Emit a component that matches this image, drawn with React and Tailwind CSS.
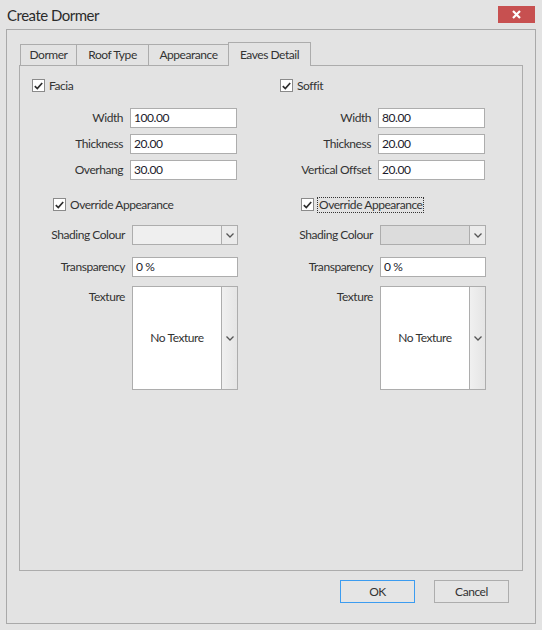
import React from "react";

// Create Dormer dialog — Eaves Detail tab

const Chevron = () => (
  <svg width="8" height="5" viewBox="0 0 8 5">
    <path d="M0.5 0.5 L4 4 L7.5 0.5" stroke="#555" strokeWidth="1.3" fill="none" />
  </svg>
);

const CheckBox = ({ label, focus }) => (
  <div className="flex items-center h-[13px]">
    <span className="w-[13px] h-[13px] border border-[#8a8a8a] bg-white flex items-center justify-center shrink-0">
      <svg width="9" height="8" viewBox="0 0 9 8">
        <path d="M0.8 4.2 L3.3 6.6 L8.2 1" stroke="#2e2e2e" strokeWidth="1.7" fill="none" />
      </svg>
    </span>
    {focus ? (
      <span className="ml-[3px] px-px h-[16px] flex items-center border border-dotted border-[#333] whitespace-nowrap">
        {label}
      </span>
    ) : (
      <span className="ml-[4px] whitespace-nowrap">{label}</span>
    )}
  </div>
);

const Field = ({ label, value }) => (
  <div className="flex items-center h-5">
    <div className="w-[91px] text-right whitespace-nowrap">{label}</div>
    <div className="ml-[7px] w-[107px] h-5 border border-[#adadad] bg-white pl-[3px] flex items-center text-[#1c1c2c]">
      {value}
    </div>
  </div>
);

const Column = ({ title, fields, focus, disabledShade }) => (
  <div className="w-[248px] shrink-0 flex flex-col">
    <CheckBox label={title} />
    <div className="mt-[16px] flex flex-col gap-[6px]">
      {fields.map((f) => (
        <Field key={f[0]} label={f[0]} value={f[1]} />
      ))}
    </div>
    <div className="mt-[18px] ml-[21px]">
      <CheckBox label="Override Appearance" focus={focus} />
    </div>
    <div className="mt-[14px] flex items-center h-5">
      <div className="w-[93px] text-right whitespace-nowrap">Shading Colour</div>
      <div className="ml-[7px] w-[106px] h-5 border border-[#adadad] flex">
        <div className={disabledShade ? "flex-1 bg-[#dcdcdc]" : "flex-1 bg-[#efefef]"} />
        <div className="w-[16px] border-l border-[#adadad] bg-[#ebebeb] flex items-center justify-center">
          <Chevron />
        </div>
      </div>
    </div>
    <div className="mt-[12px] flex items-center h-5">
      <div className="w-[93px] text-right whitespace-nowrap">Transparency</div>
      <div className="ml-[7px] w-[106px] h-5 border border-[#adadad] bg-white pl-[3px] flex items-center text-[#1c1c2c]">
        0 %
      </div>
    </div>
    <div className="mt-[9px] flex items-start">
      <div className="w-[93px] text-right pt-[2px] whitespace-nowrap">Texture</div>
      <div className="ml-[7px] w-[106px] h-[104px] border border-[#adadad] flex">
        <div className="flex-1 bg-white flex items-center justify-center">No Texture</div>
        <div className="w-[16px] border-l border-[#adadad] bg-gradient-to-r from-[#f0f0f0] to-[#e5e5e5] flex items-center justify-center">
          <Chevron />
        </div>
      </div>
    </div>
  </div>
);

const tabs = [
  { name: "Dormer", w: "w-[56px]" },
  { name: "Roof Type", w: "w-[72px]" },
  { name: "Appearance", w: "w-[80px]" },
];

export default function App() {
  return (
    <div className="w-[542px] h-[630px] bg-[#e3e3e3] text-[12px] tracking-[-0.45px] text-[#333] font-[family-name:Lato,'Noto_Sans',sans-serif] overflow-hidden">
      {/* title bar */}
      <div className="h-[29px] flex items-start justify-between pl-[7px] pr-[7px]">
        <div className="mt-[5px] text-[15px] tracking-[-0.5px] text-[#2b2b2b] leading-[20px]">Create Dormer</div>
        <div className="mt-[6px] w-[37px] h-[17px] bg-[#c75050] flex items-center justify-center">
          <svg width="9" height="9" viewBox="0 0 9 9">
            <path d="M1 1 L8 8 M8 1 L1 8" stroke="#fff" strokeWidth="2.2" />
          </svg>
        </div>
      </div>

      {/* frame */}
      <div className="ml-[6px] w-[530px] h-[595px] border border-[#a9a9a9] px-[12px] pt-[12px] flex flex-col">
        {/* tab strip */}
        <div className="h-[23px] flex items-end ml-px">
          {tabs.map((t) => (
            <div
              key={t.name}
              className={`${t.w} h-[21px] border-l border-t border-[#acacac] flex items-center justify-center`}
            >
              {t.name}
            </div>
          ))}
          <div className="relative z-10 w-[83px] h-[24px] -mb-px border-l border-t border-r border-[#acacac] bg-[#e3e3e3] flex items-start justify-center pt-[3px]">
            Eaves Detail
          </div>
        </div>

        {/* panel */}
        <div className="h-[506px] border border-[#acacac] pl-[12px] pt-[13px] flex overflow-hidden">
          <Column
            title="Facia"
            fields={[
              ["Width", "100.00"],
              ["Thickness", "20.00"],
              ["Overhang", "30.00"],
            ]}
          />
          <Column
            title="Soffit"
            focus
            disabledShade
            fields={[
              ["Width", "80.00"],
              ["Thickness", "20.00"],
              ["Vertical Offset", "20.00"],
            ]}
          />
        </div>

        {/* buttons */}
        <div className="mt-[9px] flex justify-end gap-[19px] pr-[14px]">
          <div className="w-[75px] h-[23px] border border-[#3c9cf0] bg-[#e5e5e5] flex items-center justify-center">
            OK
          </div>
          <div className="w-[75px] h-[23px] border border-[#adadad] bg-[#e5e5e5] flex items-center justify-center">
            Cancel
          </div>
        </div>
      </div>
    </div>
  );
}
